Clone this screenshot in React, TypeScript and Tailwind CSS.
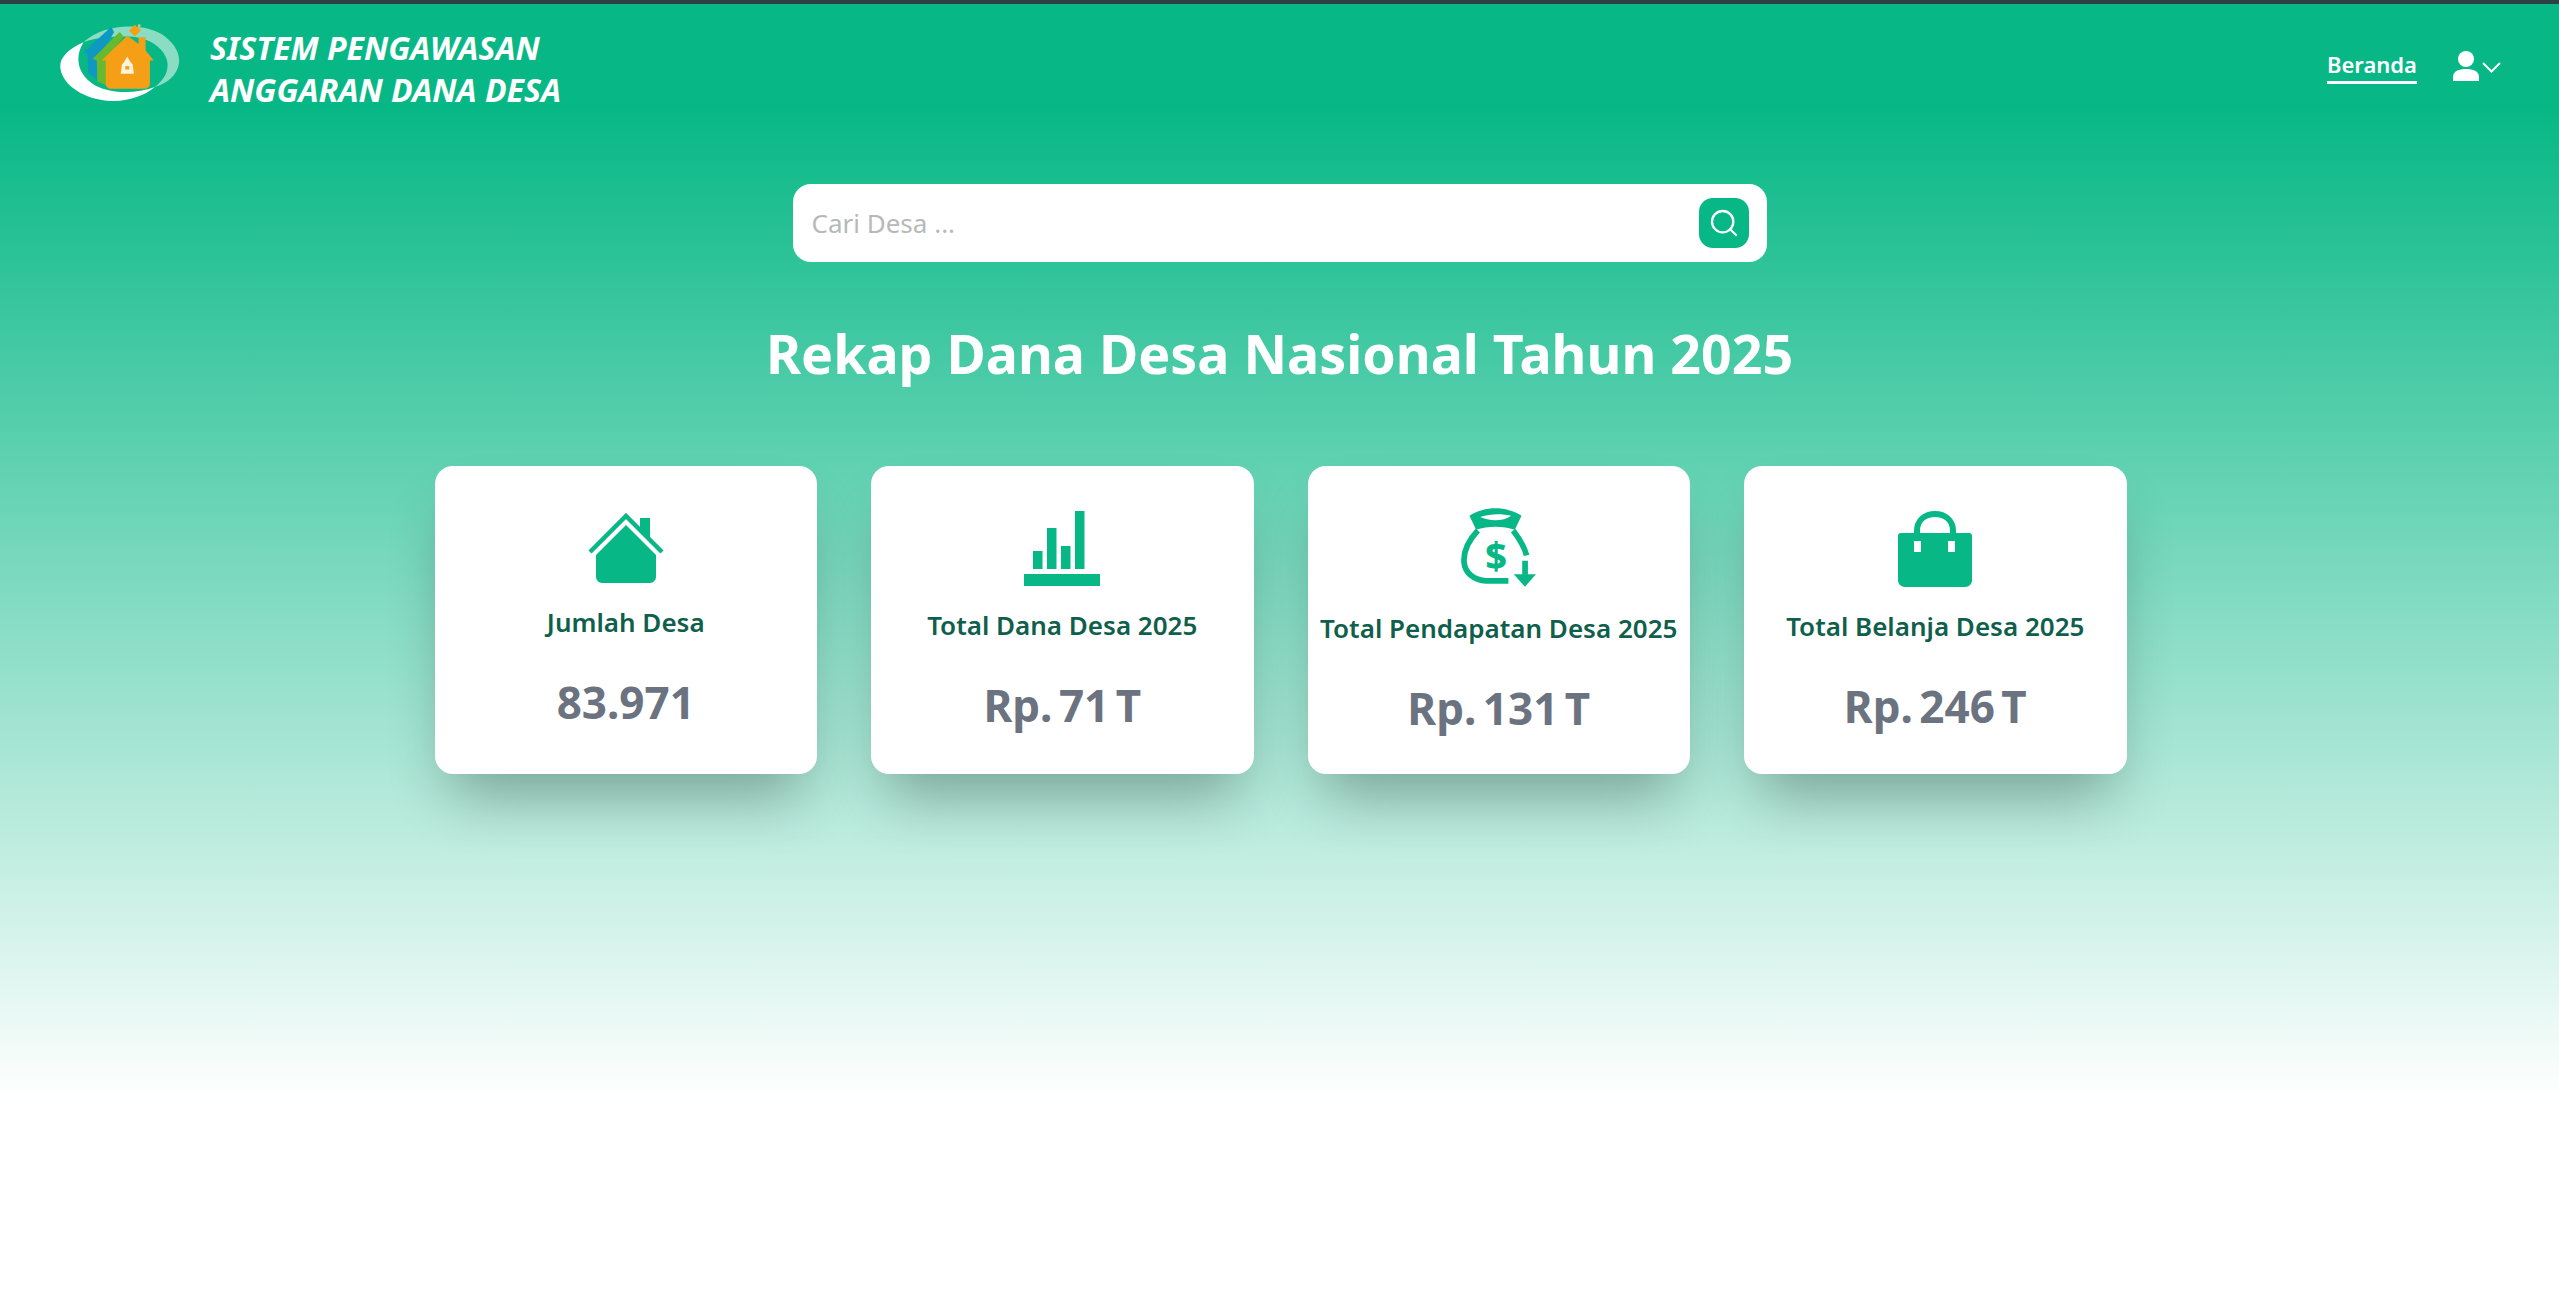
import { Search } from "lucide-react";

const font = "font-['Noto_Sans','Open_Sans',sans-serif]";

const HouseIcon = () => (
  <svg viewBox="0 0 76 70" className="h-[70px] w-[76px]">
    <path d="M2 39 38 3l36 36" fill="none" stroke="#fff" strokeWidth="12" />
    <path d="M52 5h10v24L52 18z" fill="#07b886" />
    <path d="M38 12 8 42v22c0 3 3 6 6 6h48c3 0 6-3 6-6V42z" fill="#07b886" />
    <path d="M2 39 38 3l36 36" fill="none" stroke="#07b886" strokeWidth="4.5" />
  </svg>
);

const ChartIcon = () => (
  <svg viewBox="0 0 76 75" className="h-[75px] w-[76px]" fill="#07b886">
    <rect x="9" y="40" width="9.5" height="18" />
    <rect x="23" y="17" width="9.5" height="41" />
    <rect x="37" y="35" width="9.5" height="23" />
    <rect x="51" y="0" width="9.5" height="58" />
    <rect x="0" y="63" width="76" height="12" />
  </svg>
);

const MoneyIcon = () => (
  <svg viewBox="95 55 223 235" className="mb-[2px] h-[79px] w-[75px]">
    <path d="M120 78C165 48 230 48 275 78l-20 42c-35-12-80-12-115 0z" fill="#07b886" />
    <path d="M152 82c30-10 62-11 92-4-22 17-65 17-92 4z" fill="#fff" />
    <path
      d="M145 122c-30 32-43 62-41 93 2 35 32 55 66 57h66M250 122c20 26 34 50 40 74"
      fill="none"
      stroke="#07b886"
      strokeWidth="17"
    />
    <text x="199" y="238" textAnchor="middle" fontSize="112" fontWeight="800" fill="#07b886" fontFamily="Noto Sans">
      $
    </text>
    <path d="M277 212h17v40h24l-33 37-33-37h25z" fill="#07b886" />
  </svg>
);

const BagIcon = () => (
  <svg viewBox="0 0 76 76" className="h-[76px] w-[76px]">
    <path d="M20 30V20C20 9 28 3 38 3s18 6 18 17v10" fill="none" stroke="#07b886" strokeWidth="6" />
    <path d="M4 22h68c2 0 3 1 3 3v44c0 4-3 7-7 7H8c-4 0-7-3-7-7V25c0-2 1-3 3-3z" fill="#07b886" />
    <rect x="17" y="30" width="7" height="11" fill="#fff" />
    <rect x="51" y="30" width="7" height="11" fill="#fff" />
  </svg>
);

const Logo = () => (
  <svg viewBox="60 30 360 250" className="h-[83px] w-[120px]">
    <path d="M130 100C190 45 300 40 365 75c45 30 70 75 40 120-12 18-35 32-60 40 28-22 45-50 36-82-12-42-65-72-125-70-45 1-85 2-126 17z" fill="#8adcc2" />
    <path d="M130 100C85 120 60 145 60 172c2 50 60 95 140 104 60 6 115-15 145-41-60 22-130 20-180-5-50-30-65-80-35-130z" fill="#fff" />
    <path d="M212 55 130 130l12 5 3 60 25 17 5-62 47-80c-3-8-6-13-10-15z" fill="#0f98c2" />
    <path d="M238 70 158 150l12 5 2 63 28 12V150l50-65c-3-8-7-13-12-15z" fill="#69b92e" />
    <path d="M262 80 185 155h12v70c0 8 6 15 14 15h104c8 0 15-7 15-15v-70h12l-25-30V85h-21v20z" fill="#f59f17" />
    <path d="M285 47l18 18-18 18-18-18z" fill="#f59f17" />
    <circle cx="298" cy="50" r="4" fill="#f7c36e" />
    <path d="M262 143l9 16 7 8 4 28h-40l4-28 7-8z" fill="#fff3dc" />
    <path d="M256 172h12v10h-12z" fill="#f59f17" />
  </svg>
);

const cards = [
  { label: "Jumlah Desa", value: "83.971", icon: <HouseIcon />, pad: "pt-[47px]" },
  { label: "Total Dana Desa 2025", value: "Rp. 71 T", icon: <ChartIcon />, pad: "pt-[45px]" },
  { label: "Total Pendapatan Desa 2025", value: "Rp. 131 T", icon: <MoneyIcon />, pad: "pt-[42px]" },
  { label: "Total Belanja Desa 2025", value: "Rp. 246 T", icon: <BagIcon />, pad: "pt-[45px]" },
];

export default function App() {
  return (
    <div className={`${font} min-h-[1310px] border-t-4 border-[#2d4046] bg-[linear-gradient(to_bottom,#07b886_8%,#ffffff_84%)]`}>
      <header className="flex h-[132px] items-start justify-between pl-[60px] pr-[58px]">
        <div className="flex items-start gap-[30px] pt-[15px]">
          <Logo />
          <div className="mt-[8px] text-[32px] leading-[42px] font-bold italic text-white">
            <div>SISTEM PENGAWASAN</div>
            <div>ANGGARAN DANA DESA</div>
          </div>
        </div>
        <div className="flex items-center gap-[36px] pt-[44px]">
          <a className="border-b-[3px] border-white text-[22px] leading-[33px] font-semibold text-white">Beranda</a>
          <div className="flex items-center gap-[3px] text-white">
            <svg viewBox="0 0 26 30" className="h-[30px] w-[26px]" fill="currentColor">
              <circle cx="13" cy="8" r="8" />
              <path d="M0 30v-4c0-6 6-8 13-8s13 2 13 8v4z" />
            </svg>
            <svg viewBox="0 0 19 11" className="mt-[3px] h-[11px] w-[19px]" fill="none" stroke="currentColor" strokeWidth="2">
              <path d="M1 1l8.5 8.5L18 1" />
            </svg>
          </div>
        </div>
      </header>

      <main className="flex flex-col items-center">
        <div className="mt-[48px] flex h-[78px] w-[974px] items-center justify-between rounded-[18px] bg-white pl-[19px] pr-[18px]">
          <span className="text-[26px] text-[#b5bab8]">Cari Desa ...</span>
          <button className="flex h-[50px] w-[50px] items-center justify-center rounded-[14px] bg-[#07b886] text-white">
            <Search className="h-[32px] w-[32px]" strokeWidth={1.7} />
          </button>
        </div>

        <h1 className="mt-[56px] text-[53.7px] leading-[72px] font-bold text-white">Rekap Dana Desa Nasional Tahun 2025</h1>

        <div className="ml-[2px] mt-[76px] grid w-[1692px] grid-cols-4 gap-[54px]">
          {cards.map((card) => (
            <div
              key={card.label}
              className={`flex h-[308px] flex-col items-center rounded-[18px] bg-white shadow-[0_35px_60px_-15px_rgba(0,0,0,0.3)] ${card.pad}`}
            >
              {card.icon}
              <div className="mt-[21px] whitespace-nowrap text-[26px] leading-[36px] font-semibold text-[#0f5f4c]">{card.label}</div>
              <div className="mt-[32px] text-[44px] leading-[60px] font-bold text-[#6b7280] [word-spacing:-5px]">{card.value}</div>
            </div>
          ))}
        </div>
      </main>
    </div>
  );
}
